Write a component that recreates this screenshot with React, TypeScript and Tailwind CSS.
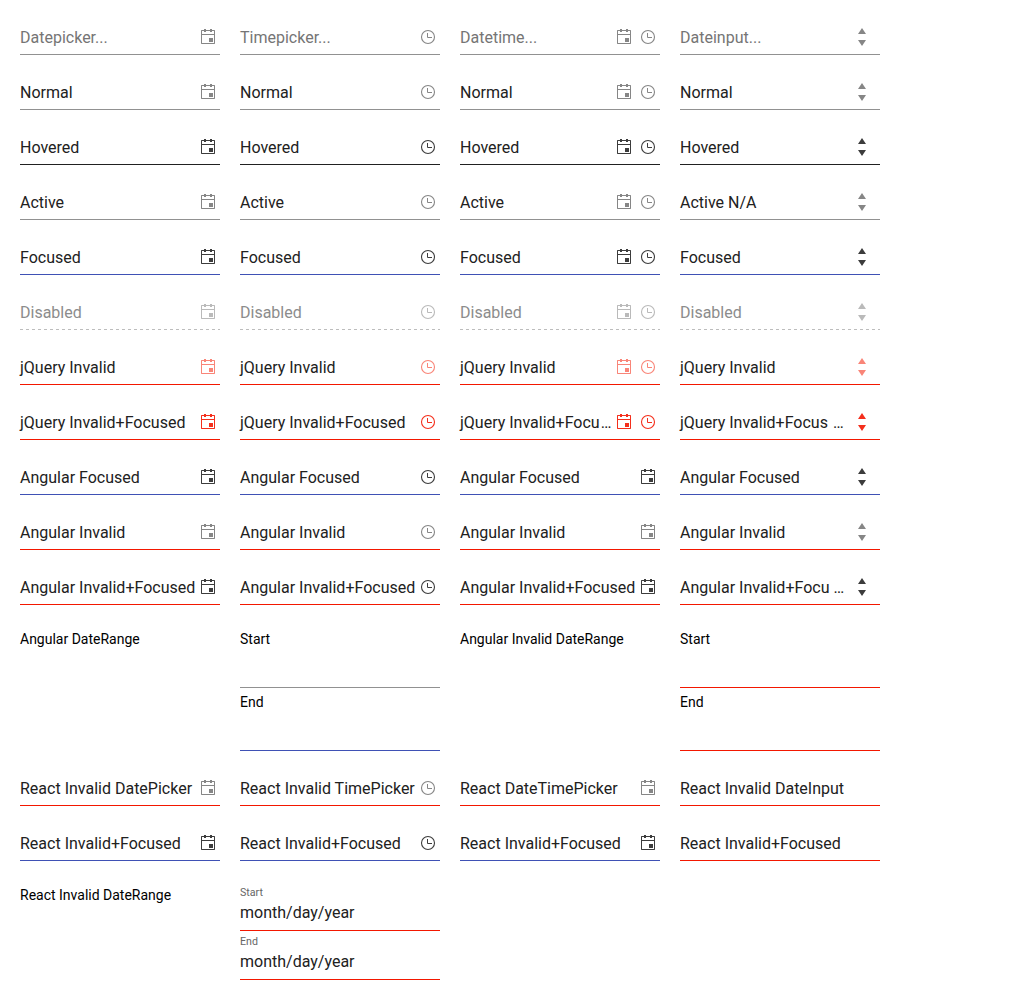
import type { ReactNode } from 'react';

type Tone = 'normal' | 'hover' | 'focus' | 'disabled' | 'invalid' | 'invalidFocus' | 'redNormal' | 'redFocus';
type IconName = 'calendar' | 'clock' | 'spin';

const tones: Record<Tone, { line: string; icon: string; text: string }> = {
  normal: { line: 'border-[#919191]', icon: 'text-[#868686]', text: 'text-[#212121]' },
  hover: { line: 'border-[#212121]', icon: 'text-[#3c3c3c]', text: 'text-[#212121]' },
  focus: { line: 'border-[#3f51b5]', icon: 'text-[#3c3c3c]', text: 'text-[#212121]' },
  disabled: { line: 'border-transparent', icon: 'text-[#bababa]', text: 'text-[#8c8c8c]' },
  invalid: { line: 'border-[#f31700]', icon: 'text-[#f98578]', text: 'text-[#212121]' },
  invalidFocus: { line: 'border-[#f31700]', icon: 'text-[#f42f1c]', text: 'text-[#212121]' },
  redNormal: { line: 'border-[#f31700]', icon: 'text-[#868686]', text: 'text-[#212121]' },
  redFocus: { line: 'border-[#f31700]', icon: 'text-[#3c3c3c]', text: 'text-[#212121]' },
};

function Calendar() {
  return (
    <svg width="16" height="16" viewBox="0 0 16 16" fill="currentColor">
      <path
        fillRule="evenodd"
        d="M1.5 1H4V0H6V1H10V0H12V1H14.5L15 1.5V14.5L14.5 15H1.5L1 14.5V1.5ZM2 2V5H14V2H12V3H10V2H6V3H4V2ZM2 6V14H14V6Z"
      />
      <path d="M9 9H13V13H9Z" />
    </svg>
  );
}

function Clock() {
  return (
    <svg width="16" height="16" viewBox="0 0 16 16" fill="none" stroke="currentColor">
      <circle cx="8" cy="8" r="6.5" strokeWidth="1.1" />
      <path d="M7.5 4V8.5H12" />
    </svg>
  );
}

function Spin() {
  return (
    <svg width="16" height="20" viewBox="0 0 16 20" fill="currentColor" className="mr-[2px]">
      <path d="M8 1L12 7H4ZM4 13H12L8 19Z" />
    </svg>
  );
}

const glyphs: Record<IconName, ReactNode> = { calendar: <Calendar />, clock: <Clock />, spin: <Spin /> };

function Field({ text, tone, icons, placeholder }: { text: ReactNode; tone: Tone; icons: IconName[]; placeholder?: boolean }) {
  const t = tones[tone];
  return (
    <div className={`relative flex h-[35px] w-[200px] items-center border-b ${t.line}`}>
      <span className={`min-w-0 flex-1 whitespace-pre pt-0.5 text-base leading-6 ${placeholder ? 'text-[#757575]' : t.text}`}>{text}</span>
      <span className={`flex shrink-0 gap-2 ${icons[0] === 'spin' ? 'pr-2' : 'pr-1'} ${t.icon}`}>
        {icons.map((n) => (
          <span key={n}>{glyphs[n]}</span>
        ))}
      </span>
      {tone === 'disabled' && (
        <svg className="absolute left-0 top-[34px]" width="200" height="1">
          <path d="M0 .5H200" stroke="#bdbdbd" strokeDasharray="3 3" />
        </svg>
      )}
    </div>
  );
}

function Row({ labels, tone, combined = true, placeholder, plainInput, lastTone }: {
  labels: ReactNode[]; tone: Tone; combined?: boolean; placeholder?: boolean; plainInput?: boolean; lastTone?: Tone;
}) {
  const icons: IconName[][] = [['calendar'], ['clock'], combined ? ['calendar', 'clock'] : ['calendar'], plainInput ? [] : ['spin']];
  return (
    <div className="flex gap-5">
      {labels.map((l, i) => (
        <Field key={i} text={l} tone={i === 3 && lastTone ? lastTone : tone} icons={icons[i]} placeholder={placeholder} />
      ))}
    </div>
  );
}

const same = (s: string) => [s, s, s, s];

function Clipped({ children }: { children: string }) {
  return (
    <>
      {children}
      <span className="ml-px">…</span>
    </>
  );
}

function Range({ title, first, second }: { title: string; first: string; second: string }) {
  return (
    <div className="flex gap-5 text-sm leading-5 text-black">
      <div className="w-[200px]">{title}</div>
      <div className="w-[200px]">
        <div className={`h-[59px] border-b ${first}`}>Start</div>
        <div className={`mt-1 h-[59px] border-b ${second}`}>End</div>
      </div>
    </div>
  );
}

function LabeledInput({ label }: { label: string }) {
  return (
    <div className="h-[49px] border-b border-[#f31700]">
      <div className="pt-1 text-[10.67px] leading-[14px] text-[#666]">{label}</div>
      <div className="text-base leading-[26px] text-[#212121]">month/day/year</div>
    </div>
  );
}

export default function App() {
  return (
    <main className="h-[999px] w-[1024px] overflow-hidden bg-white px-5 pt-5 font-[Roboto,sans-serif]">
      <div className="flex flex-col gap-5">
        <Row tone="normal" placeholder labels={['Datepicker...', 'Timepicker...', 'Datetime...', 'Dateinput...']} />
        <Row tone="normal" labels={same('Normal')} />
        <Row tone="hover" labels={same('Hovered')} />
        <Row tone="normal" labels={['Active', 'Active', 'Active', 'Active N/A']} />
        <Row tone="focus" labels={same('Focused')} />
        <Row tone="disabled" labels={same('Disabled')} />
        <Row tone="invalid" labels={same('jQuery Invalid')} />
        <Row
          tone="invalidFocus"
          labels={['jQuery Invalid+Focused', 'jQuery Invalid+Focused', <Clipped>jQuery Invalid+Focu</Clipped>, <Clipped>{'jQuery Invalid+Focus '}</Clipped>]}
        />
        <Row tone="focus" combined={false} labels={same('Angular Focused')} />
        <Row tone="redNormal" combined={false} labels={same('Angular Invalid')} />
        <Row tone="redFocus" combined={false} labels={['Angular Invalid+Focused', 'Angular Invalid+Focused', 'Angular Invalid+Focused', 'Angular Invalid+Focu …']} />
      </div>
      <div className="mt-6 flex gap-5">
        <Range title="Angular DateRange" first="border-[#919191]" second="border-[#3f51b5]" />
        <Range title="Angular Invalid DateRange" first="border-[#f31700]" second="border-[#f31700]" />
      </div>
      <div className="mt-5 flex flex-col gap-5">
        <Row tone="redNormal" combined={false} plainInput labels={['React Invalid DatePicker', 'React Invalid TimePicker', 'React DateTimePicker', 'React Invalid DateInput']} />
        <Row tone="focus" lastTone="redFocus" combined={false} plainInput labels={same('React Invalid+Focused')} />
      </div>
      <div className="mt-[21px] flex gap-5">
        <div className="w-[200px] pt-[3px] text-sm leading-5 text-black">React Invalid DateRange</div>
        <div className="w-[200px]">
          <LabeledInput label="Start" />
          <LabeledInput label="End" />
        </div>
      </div>
    </main>
  );
}
